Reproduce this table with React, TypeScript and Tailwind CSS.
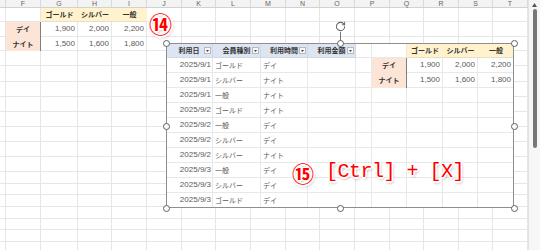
import { RotateCw } from 'lucide-react';

const COL_LETTERS = ['', 'F', 'G', 'H', 'I', 'J', 'K', 'L', 'M', 'N', 'O', 'P', 'Q', 'R', 'S', 'T'];
const SHEET_ROWS = 18;
const SHEET_COLS = 16;

const TIERS = ['ゴールド', 'シルバー', '一般'];
const PRICES = [
  { label: 'デイ', values: ['1,900', '2,000', '2,200'] },
  { label: 'ナイト', values: ['1,500', '1,600', '1,800'] },
];

const HEADERS = ['利用日', '会員種別', '利用時間', '利用金額'];
const USES = [
  ['2025/9/1', 'ゴールド', 'デイ'],
  ['2025/9/1', 'シルバー', 'ナイト'],
  ['2025/9/1', '一般', 'ナイト'],
  ['2025/9/2', 'ゴールド', 'ナイト'],
  ['2025/9/2', '一般', 'デイ'],
  ['2025/9/2', 'シルバー', 'デイ'],
  ['2025/9/2', 'シルバー', 'ナイト'],
  ['2025/9/3', '一般', 'デイ'],
  ['2025/9/3', 'シルバー', 'デイ'],
  ['2025/9/3', 'ゴールド', 'デイ'],
];

const HANDLES = [
  'left-[163px] top-[40px]',
  'left-[337px] top-[40px]',
  'left-[511px] top-[40px]',
  'left-[163px] top-[123px]',
  'left-[511px] top-[123px]',
  'left-[163px] top-[205px]',
  'left-[337px] top-[205px]',
  'left-[511px] top-[205px]',
];

const OUTLINE =
  '[text-shadow:-1px_-1px_0_#fff,1px_-1px_0_#fff,-1px_1px_0_#fff,1px_1px_0_#fff,0_-1.5px_0_#fff,0_1.5px_0_#fff,-1.5px_0_0_#fff,1.5px_0_0_#fff,1px_2px_3px_rgba(0,0,0,0.45)]';

function SheetCell({ r, c }: { r: number; c: number }) {
  if (r === 0 && c >= 2 && c <= 4) {
    return (
      <div className="bg-[#fff2cc] border-b border-[#e8e0c4] flex items-center justify-center font-bold text-[7px] text-[#333]">
        {TIERS[c - 2]}
      </div>
    );
  }
  if ((r === 1 || r === 2) && c === 1) {
    return (
      <div className="bg-[#fce4d6] border-r border-[#808080] flex items-center justify-center font-bold text-[7px] text-[#333]">
        {PRICES[r - 1].label}
      </div>
    );
  }
  if ((r === 1 || r === 2) && c >= 2 && c <= 4) {
    return (
      <div className="border-r border-b border-[#e6e6e6] flex items-center justify-end pr-[2px] text-[#5a5a5a]">
        {PRICES[r - 1].values[c - 2]}
      </div>
    );
  }
  return <div className="border-r border-b border-[#e6e6e6]" />;
}

function FilterButton() {
  return (
    <div className="absolute right-[1px] top-[4px] w-[7px] h-[7px] border border-[#b9b9b9] bg-[#f7f7f7] flex items-center justify-center">
      <svg width="3" height="2" viewBox="0 0 3 2">
        <path d="M0 0h3L1.5 2z" fill="#444" />
      </svg>
    </div>
  );
}

function PictureCell({ r, c }: { r: number; c: number }) {
  const grid = 'border-r border-b border-[#e8e8e8]';
  if (r === 0 && c < 4) {
    return (
      <div className="relative bg-[#dde5f2] border-r border-b border-[#d0d8e6] flex items-center justify-center font-bold text-[7px] text-[#333]">
        {HEADERS[c]}
        <FilterButton />
      </div>
    );
  }
  if (r === 0 && c >= 6) {
    return (
      <div className="bg-[#fff2cc] border-b border-[#e8e0c4] flex items-center justify-center font-bold text-[7px] text-[#333]">
        {TIERS[c - 6]}
      </div>
    );
  }
  if ((r === 1 || r === 2) && c === 5) {
    return (
      <div className="bg-[#fce4d6] border-r border-[#808080] flex items-center justify-center font-bold text-[7px] text-[#333]">
        {PRICES[r - 1].label}
      </div>
    );
  }
  if ((r === 1 || r === 2) && c >= 6) {
    return (
      <div className={`${grid} flex items-center justify-end pr-[2px] text-[#5a5a5a]`}>
        {PRICES[r - 1].values[c - 6]}
      </div>
    );
  }
  if (r >= 1 && c === 0) {
    return <div className={`${grid} flex items-center justify-end pr-[1px] text-[#5a5a5a]`}>{USES[r - 1][0]}</div>;
  }
  if (r >= 1 && (c === 1 || c === 2)) {
    return <div className={`${grid} flex items-center pl-[2px] text-[7px] text-[#5a5a5a]`}>{USES[r - 1][c]}</div>;
  }
  return <div className={grid} />;
}

export default function App() {
  return (
    <div className="relative w-[540px] h-[250px] overflow-hidden bg-white flex text-[8px] leading-none font-['Liberation_Sans','Noto_Sans_CJK_JP',sans-serif]">
      {/* sheet */}
      <div className="w-[528px] flex flex-col">
        <div className="grid grid-cols-[6px_35px_37px_34px_35px_35px_34px_35px_35px_34px_35px_35px_34px_35px_34px_35px] h-[12px] bg-[#f3f3f3] border-b border-[#d2d2d2]">
          {COL_LETTERS.map((l, i) => (
            <div key={i} className="border-r border-[#d9d9d9] flex items-center justify-center text-[7px] text-[#666]">
              {l}
            </div>
          ))}
        </div>
        <div className="grid grid-cols-[6px_35px_37px_34px_35px_35px_34px_35px_35px_34px_35px_35px_34px_35px_34px_35px] grid-rows-[14px_15px_14px_15px_16px_15px_15px_15px_15px_15px_15px_12px_11px_12px_12px_11px_12px_12px]">
          {Array.from({ length: SHEET_ROWS }).map((_, r) =>
            Array.from({ length: SHEET_COLS }).map((_, c) => <SheetCell key={`${r}-${c}`} r={r} c={c} />),
          )}
        </div>
      </div>

      {/* scrollbar */}
      <div className="w-[12px] bg-[#f6f6f6] border-l border-[#e2e2e2] flex flex-col items-center">
        <svg width="5" height="4" viewBox="0 0 5 4" className="mt-[3px]">
          <path d="M2.5 0L5 4H0z" fill="#555" />
        </svg>
        <div className="mt-[2px] w-[4px] h-[139px] rounded-full bg-[#767676]" />
      </div>

      {/* picture object */}
      <div className="absolute left-[166px] top-[43px] w-[348px] h-[165px] bg-white grid grid-cols-[47px_48px_47px_48px_16px_35px_36px_35px_36px] grid-rows-[repeat(11,15px)]">
        {Array.from({ length: 11 }).map((_, r) =>
          Array.from({ length: 9 }).map((_, c) => <PictureCell key={`${r}-${c}`} r={r} c={c} />),
        )}
      </div>
      <div className="absolute left-[166px] top-[43px] w-[348px] h-[165px] border-[1.5px] border-[#8e8e8e] pointer-events-none" />

      {/* rotate handle */}
      <RotateCw className="absolute left-[335px] top-[21px] w-[11px] h-[11px] text-[#666]" strokeWidth={2.2} />
      <div className="absolute left-[340px] top-[32px] w-px h-[9px] bg-[#777]" />
      {HANDLES.map((h) => (
        <div key={h} className={`absolute ${h} w-[7px] h-[7px] rounded-full border border-[#5f5f5f] bg-white`} />
      ))}

      {/* callouts */}
      <div className={`absolute left-[149px] top-[12px] text-[23px] leading-none font-bold text-[#ff0000] font-['Noto_Sans_CJK_JP',sans-serif] ${OUTLINE}`}>⑭</div>
      <div className={`absolute left-[292px] top-[161px] flex items-center gap-[12px] text-[#ff0000] ${OUTLINE}`}>
        <span className="text-[22px] leading-none font-bold font-['Noto_Sans_CJK_JP',sans-serif]">⑮</span>
        <span className="text-[20px] leading-none tracking-[-0.5px] font-['Liberation_Mono',monospace]">[Ctrl] + [X]</span>
      </div>
    </div>
  );
}
